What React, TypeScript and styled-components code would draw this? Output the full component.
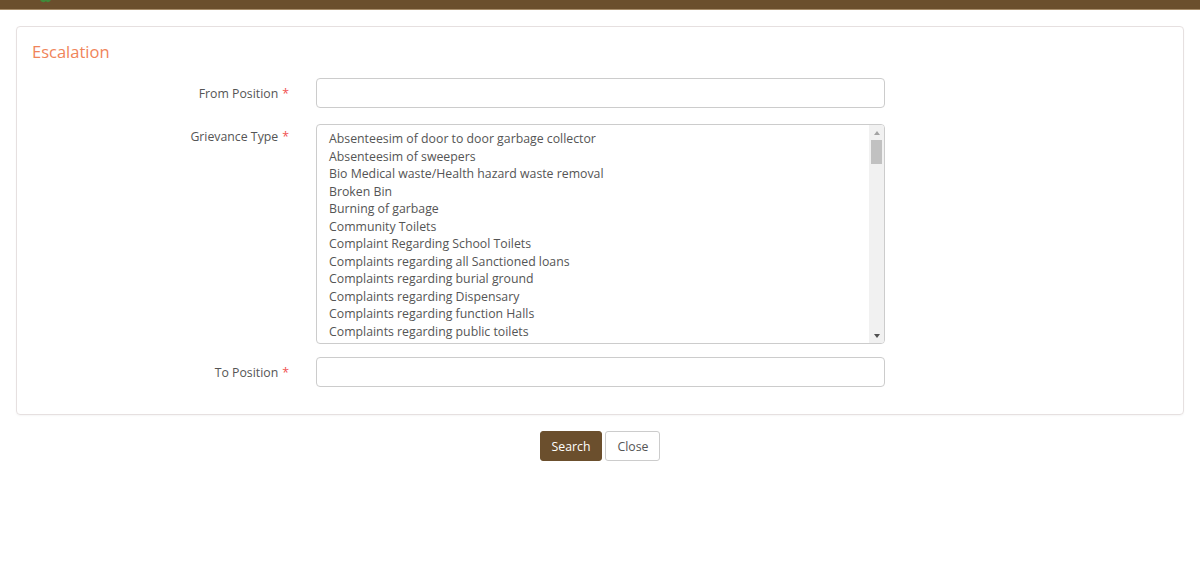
import React from "react";
import styled, { createGlobalStyle } from "styled-components";

const Global = createGlobalStyle`
  html, body { margin: 0; padding: 0; background: #fff; }
  body { font-family: "Open Sans", "Liberation Sans", sans-serif; color: #555; }
  * { box-sizing: border-box; }
`;

const TopBar = styled.div`
  height: 10px;
  background: #6b4f2d;
  border-bottom: 1px solid #a88d6a;
  display: flex;
  align-items: flex-start;
  padding-left: 38px;
`;

const Page = styled.div`
  padding: 16px 16px 0 16px;
`;

const Panel = styled.div`
  border: 1px solid #e6e0e0;
  border-radius: 4px;
  box-shadow: 0 1px 2px rgba(0, 0, 0, 0.04);
  padding: 14px 0 27px 0;
`;

const Title = styled.div`
  color: #f0845a;
  font-size: 16.5px;
  line-height: 22px;
  padding-left: 15px;
  margin-bottom: 15px;
`;

const Row = styled.div<{ $gap: number }>`
  display: grid;
  grid-template-columns: 272px 569px;
  column-gap: 27px;
  margin-bottom: ${(p) => p.$gap}px;
`;

const Label = styled.label<{ $top?: boolean }>`
  text-align: right;
  font-size: 12.3px;
  color: #555;
  align-self: ${(p) => (p.$top ? "start" : "center")};
  padding-top: ${(p) => (p.$top ? "4px" : "0")};
`;

const Req = styled.span`
  color: #f05252;
  margin-left: 4px;
`;

const Input = styled.input`
  height: 30px;
  width: 100%;
  border: 1px solid #ccc;
  border-radius: 4px;
  padding: 4px 12px;
  font-family: inherit;
  font-size: 12.3px;
  color: #555;
  outline: none;
`;

const ListBox = styled.div`
  height: 220px;
  border: 1px solid #ccc;
  border-radius: 4px;
  display: flex;
  overflow: hidden;
`;

const Options = styled.div`
  flex: 1;
  overflow: hidden;
  padding: 5px 12px;
`;

const Option = styled.div`
  font-size: 12.3px;
  line-height: 17.5px;
  color: #555;
  white-space: nowrap;
`;

const Scrollbar = styled.div`
  width: 15px;
  background: #f1f1f1;
  display: flex;
  flex-direction: column;
  align-items: center;
`;

const Arrow = styled.div<{ $down?: boolean }>`
  height: 15px;
  width: 15px;
  display: flex;
  align-items: center;
  justify-content: center;
  &::after {
    content: "";
    border-left: 3.5px solid transparent;
    border-right: 3.5px solid transparent;
    ${(p) =>
      p.$down
        ? "border-top: 4px solid #505050;"
        : "border-bottom: 4px solid #a3a3a3;"}
  }
`;

const Thumb = styled.div`
  width: 11px;
  height: 24px;
  background: #c1c1c1;
`;

const Spacer = styled.div`
  flex: 1;
`;

const Actions = styled.div`
  display: flex;
  justify-content: center;
  gap: 3px;
  margin-top: 16px;
`;

const Button = styled.button<{ $primary?: boolean }>`
  height: 30px;
  padding: 0 11px;
  border-radius: 3px;
  font-family: inherit;
  font-size: 12.3px;
  cursor: pointer;
  background: ${(p) => (p.$primary ? "#6b4f2d" : "#fff")};
  color: ${(p) => (p.$primary ? "#fff" : "#555")};
  border: 1px solid ${(p) => (p.$primary ? "#6b4f2d" : "#ccc")};
`;

const types = [
  "Absenteesim of door to door garbage collector",
  "Absenteesim of sweepers",
  "Bio Medical waste/Health hazard waste removal",
  "Broken Bin",
  "Burning of garbage",
  "Community Toilets",
  "Complaint Regarding School Toilets",
  "Complaints regarding all Sanctioned loans",
  "Complaints regarding burial ground",
  "Complaints regarding Dispensary",
  "Complaints regarding function Halls",
  "Complaints regarding public toilets",
];

export default function App() {
  return (
    <>
      <Global />
      <TopBar>
        <svg width="14" height="4" viewBox="0 0 14 4">
          <path d="M2 0 Q5 4 8 1 Q10 4 13 0 Z" fill="#3f8a3a" />
        </svg>
      </TopBar>
      <Page>
        <Panel>
          <Title>Escalation</Title>
          <Row $gap={16}>
            <Label>
              From Position<Req>*</Req>
            </Label>
            <Input type="text" />
          </Row>
          <Row $gap={13}>
            <Label $top>
              Grievance Type<Req>*</Req>
            </Label>
            <ListBox>
              <Options>
                {types.map((t) => (
                  <Option key={t}>{t}</Option>
                ))}
              </Options>
              <Scrollbar>
                <Arrow />
                <Thumb />
                <Spacer />
                <Arrow $down />
              </Scrollbar>
            </ListBox>
          </Row>
          <Row $gap={0}>
            <Label>
              To Position<Req>*</Req>
            </Label>
            <Input type="text" />
          </Row>
        </Panel>
        <Actions>
          <Button $primary>Search</Button>
          <Button>Close</Button>
        </Actions>
      </Page>
    </>
  );
}
